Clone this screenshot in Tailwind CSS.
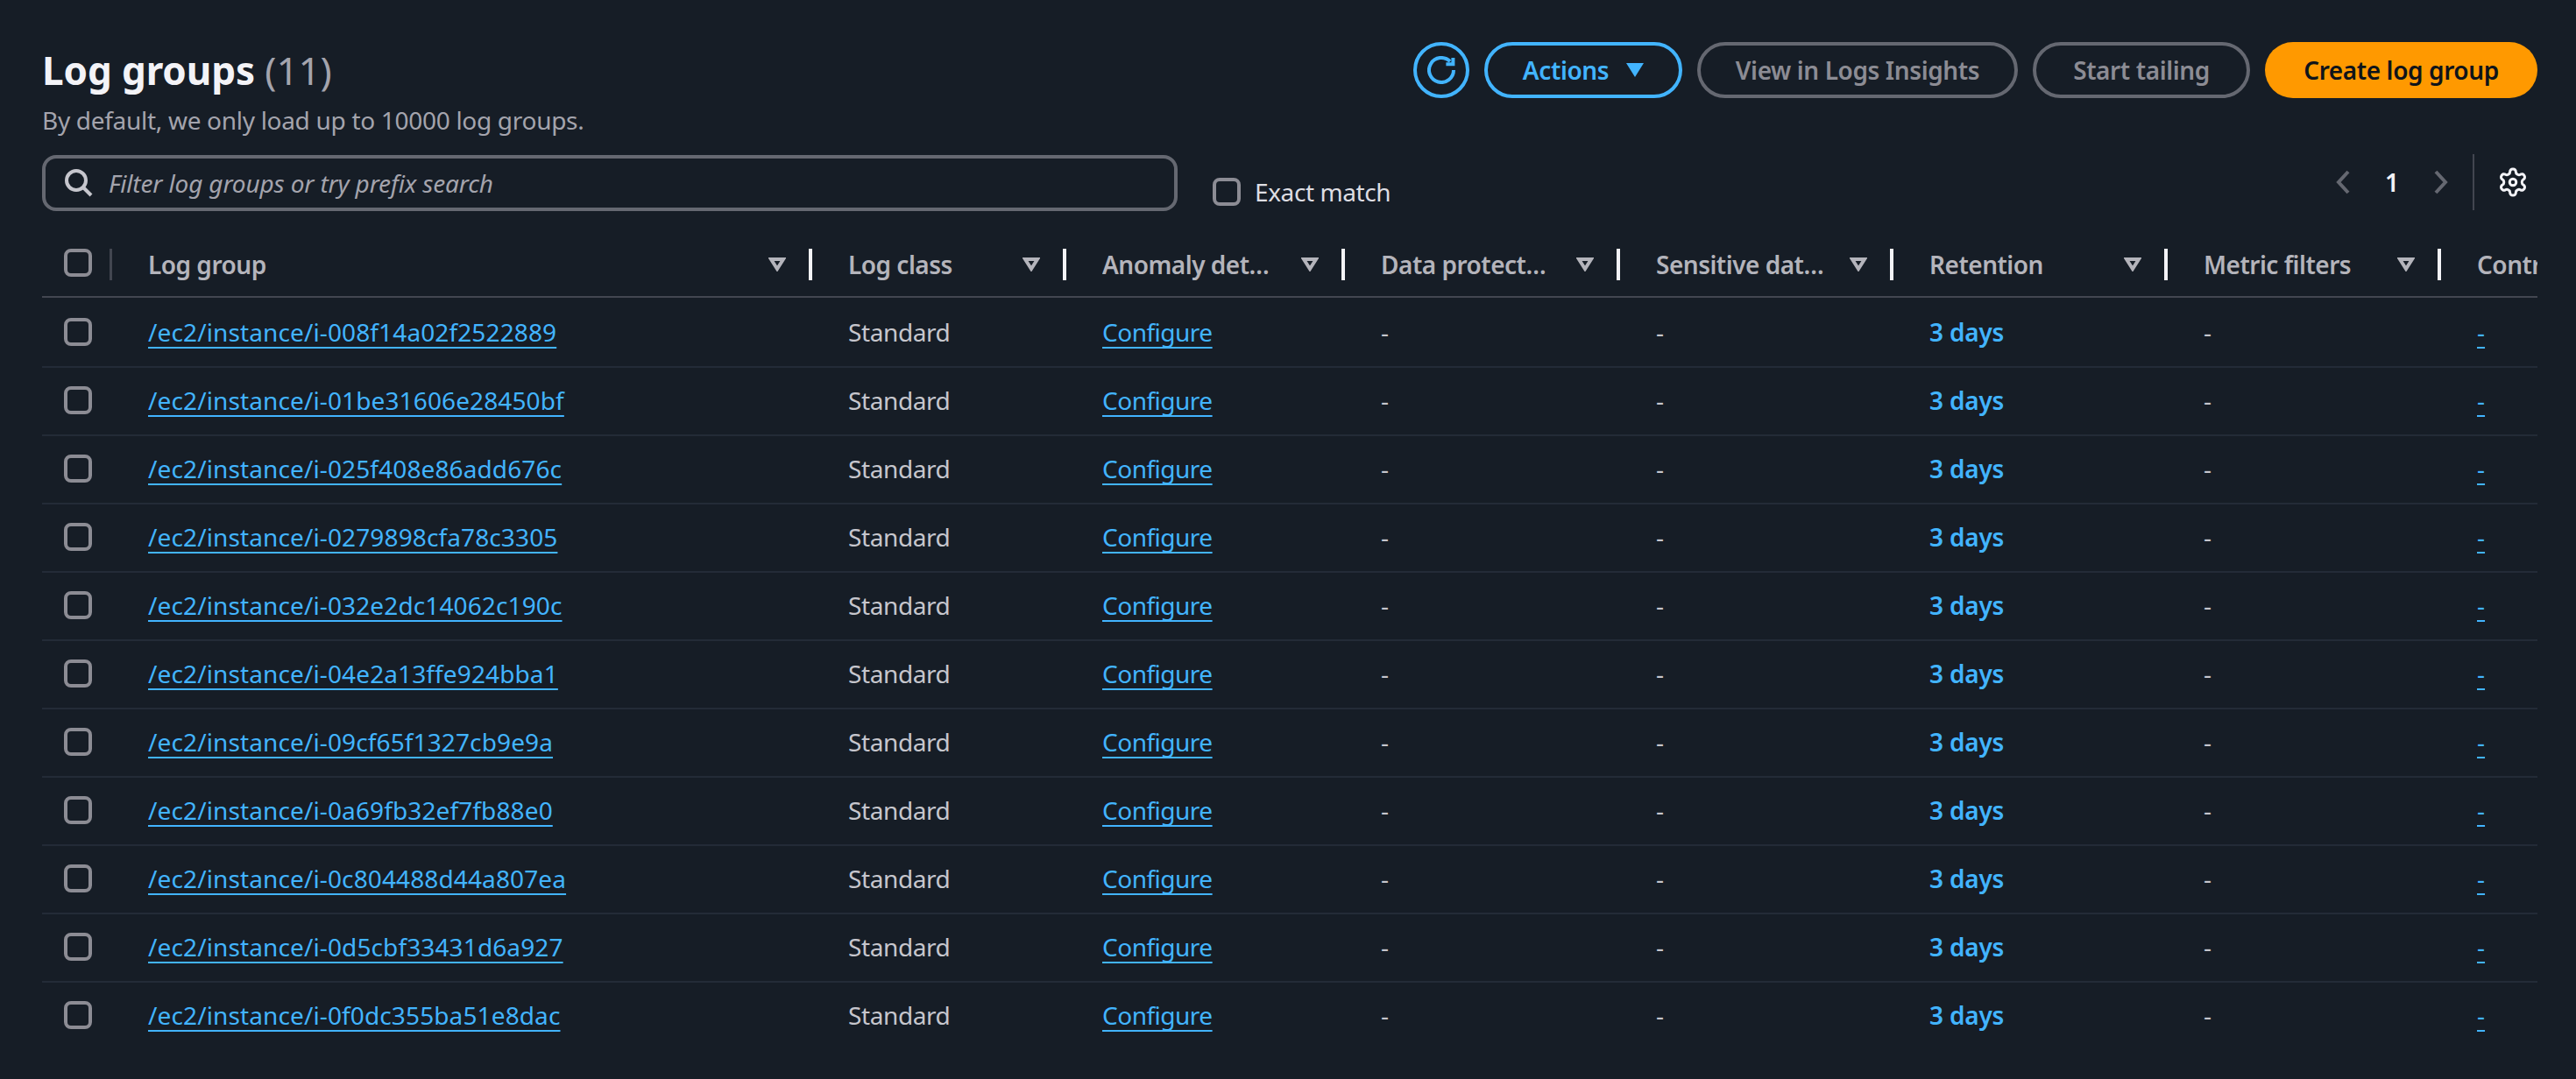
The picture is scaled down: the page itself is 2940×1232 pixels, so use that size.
<!DOCTYPE html>
<html lang="en">
<head>
<meta charset="UTF-8">
<title>Log groups</title>
<script src="https://cdn.jsdelivr.net/npm/@tailwindcss/browser@4"></script>
</head>
<body class="bg-[#161d26] font-['Noto_Sans',sans-serif] text-[28px] text-[#c6c6cd] overflow-hidden">
<main class="w-[2940px] h-[1232px] pl-12 pr-11 pt-12">

  <!-- Header -->
  <header class="flex justify-between h-[128px]">
    <div>
      <h1 class="text-[44px] leading-[72px] -mt-[4px] font-bold text-[#f3f3f7] tracking-[-0.1px]">Log groups <span class="font-normal text-[#a4a4ad]">(11)</span></h1>
      <p class="text-[#a4a4ad] leading-[36px] mt-[3px] tracking-[-0.3px]">By default, we only load up to 10000 log groups.</p>
    </div>
    <div class="flex gap-[17px] h-16 font-semibold tracking-[-0.4px]">
      <button class="w-16 h-16 rounded-full border-4 border-[#42b4ff] flex items-center justify-center">
        <svg class="w-8 h-8" viewBox="0 0 16 16" fill="none" stroke="#42b4ff" stroke-width="2"><path d="M15 8a7 7 0 1 1-2-4.9"/><path d="M14.7 1v3.6h-4"/></svg>
      </button>
      <button class="w-[226px] h-16 rounded-full border-4 border-[#42b4ff] text-[#42b4ff] flex items-center justify-center gap-5">
        Actions
        <svg class="w-5 h-4" viewBox="0 0 20 16"><path d="M0 0h20L10 16z" fill="#42b4ff"/></svg>
      </button>
      <button class="w-[366px] h-16 rounded-full border-4 border-[#656871] text-[#8c8c94]">View in Logs Insights</button>
      <button class="w-[248px] h-16 rounded-full border-4 border-[#656871] text-[#8c8c94]">Start tailing</button>
      <button class="w-[311px] h-16 rounded-full bg-[#ff9900] text-[#0f141a]">Create log group</button>
    </div>
  </header>

  <!-- Filter and pagination -->
  <section class="flex h-16 mt-[1px]">
    <div class="w-[1296px] h-16 rounded-2xl border-4 border-[#656871] flex items-center pl-[22px] gap-[18px]">
      <svg class="w-8 h-8 shrink-0" viewBox="0 0 16 16" fill="none" stroke="#c6c6cd" stroke-width="2"><circle cx="6.5" cy="6.5" r="5.5"/><path d="M10.5 10.5L15 15"/></svg>
      <span class="italic text-[#a4a4ad] tracking-[-0.15px]">Filter log groups or try prefix search</span>
    </div>
    <label class="ml-10 flex items-center gap-4 h-16 self-start mt-[10px] text-[#dedee3] tracking-[-0.4px]">
      <span class="w-8 h-8 rounded-lg border-4 border-[#8c8c94]"></span>
      Exact match
    </label>
    <div class="ml-auto flex items-center h-16 -mt-[1px] mr-[10px]">
      <svg class="w-4 h-7" viewBox="0 0 16 28" fill="none" stroke="#656871" stroke-width="4"><path d="M14 2L3 14l11 12"/></svg>
      <span class="w-[96px] text-center text-[#f3f3f7] font-semibold">1</span>
      <svg class="w-4 h-7" viewBox="0 0 16 28" fill="none" stroke="#656871" stroke-width="4"><path d="M2 2l11 12L2 26"/></svg>
      <span class="w-[2px] h-16 bg-[#424650] ml-[28px]"></span>
      <svg class="w-9 h-9 ml-[26px] mb-[1px]" viewBox="0 0 24 24" fill="none" stroke="#f3f3f7" stroke-width="2"><path d="M12.22 2h-.44a2 2 0 0 0-2 2v.18a2 2 0 0 1-1 1.73l-.43.25a2 2 0 0 1-2 0l-.15-.08a2 2 0 0 0-2.73.73l-.22.38a2 2 0 0 0 .73 2.73l.15.1a2 2 0 0 1 1 1.72v.51a2 2 0 0 1-1 1.74l-.15.09a2 2 0 0 0-.73 2.73l.22.38a2 2 0 0 0 2.73.73l.15-.08a2 2 0 0 1 2 0l.43.25a2 2 0 0 1 1 1.73V20a2 2 0 0 0 2 2h.44a2 2 0 0 0 2-2v-.18a2 2 0 0 1 1-1.73l.43-.25a2 2 0 0 1 2 0l.15.08a2 2 0 0 0 2.73-.73l.22-.39a2 2 0 0 0-.73-2.73l-.15-.08a2 2 0 0 1-1-1.74v-.5a2 2 0 0 1 1-1.74l.15-.09a2 2 0 0 0 .73-2.73l-.22-.38a2 2 0 0 0-2.73-.73l-.15.08a2 2 0 0 1-2 0l-.43-.25a2 2 0 0 1-1-1.73V4a2 2 0 0 0-2-2z"/><circle cx="12" cy="12" r="2.5"/></svg>
    </div>
  </section>

  <!-- Table -->
  <section class="mt-[29px] overflow-hidden">
    <div id="table-head" class="grid grid-cols-[80px_799px_290px_318px_314px_312px_313px_312px_200px] h-[64px] pb-1 border-b-2 border-[#424650] box-content w-[2848px] font-semibold text-[#b4b4bb] tracking-[-0.5px]"></div>
    <div id="table-body" class="pt-[2px]"></div>
  </section>
</main>

<script>
  // label, and the gap before the caret (decides where the label is cut)
  const columns = [
    ['Log group', 'ml-[22px]'],
    ['Log class', 'ml-[22px]'],
    ['Anomaly detection', 'ml-[22px]'],
    ['Data protection', 'ml-[30px]'],
    ['Sensitive data count', 'ml-[22px]'],
    ['Retention', 'ml-[22px]'],
    ['Metric filters', 'ml-[22px]']
  ];
  const groups = [
    'i-008f14a02f2522889', 'i-01be31606e28450bf', 'i-025f408e86add676c', 'i-0279898cfa78c3305',
    'i-032e2dc14062c190c', 'i-04e2a13ffe924bba1', 'i-09cf65f1327cb9e9a', 'i-0a69fb32ef7fb88e0',
    'i-0c804488d44a807ea', 'i-0d5cbf33431d6a927', 'i-0f0dc355ba51e8dac'
  ];

  let head = `<div class="flex items-center pl-[25px]"><span class="w-8 h-8 mb-1 rounded-lg border-4 border-[#8c8c94]"></span><span class="w-[3px] h-9 bg-[#424650] ml-5"></span></div>`;
  columns.forEach(function(col) {
    head += `<div class="flex items-center pl-[41px] min-w-0"><span class="truncate flex-1">${col[0]}</span><svg class="w-5 h-4 shrink-0 ${col[1]}" viewBox="0 0 20 16" fill="none" stroke="#b4b4bb" stroke-width="4"><path d="M3 2h14L10 13z"/></svg><span class="w-1 h-9 bg-[#f3f3f7] ml-[26px] shrink-0"></span></div>`;
  });
  head += `<div class="flex items-center pl-[41px]"><span class="whitespace-nowrap">Contributor Insights</span></div>`;
  document.getElementById('table-head').innerHTML = head;

  let rows = '';
  groups.forEach(function(id, i) {
    const border = i < groups.length - 1 ? 'border-[#232b37]' : 'border-transparent';
    rows += `<div class="grid grid-cols-[80px_799px_290px_318px_314px_312px_313px_312px_200px] w-[2848px] items-center h-[78px] pb-[2px] border-b-2 ${border}">
      <div class="pl-[25px] flex"><span class="w-8 h-8 rounded-lg border-4 border-[#8c8c94]"></span></div>
      <div class="pl-[41px]"><a class="text-[#42b4ff] tracking-[0.12px] underline underline-offset-[6px] decoration-2 [text-decoration-skip-ink:none]">/ec2/instance/${id}</a></div>
      <div class="pl-[41px] tracking-[-0.4px]">Standard</div>
      <div class="pl-[41px]"><a class="text-[#42b4ff] tracking-[-0.5px] underline underline-offset-[6px] decoration-2 [text-decoration-skip-ink:none]">Configure</a></div>
      <div class="pl-[41px]">-</div>
      <div class="pl-[41px]">-</div>
      <div class="pl-[41px] text-[#42b4ff] font-semibold tracking-[-0.2px]">3 days</div>
      <div class="pl-[41px]">-</div>
      <div class="pl-[41px]"><a class="text-[#42b4ff] underline underline-offset-[6px] decoration-2 [text-decoration-skip-ink:none]">-</a></div>
    </div>`;
  });
  document.getElementById('table-body').innerHTML = rows;
</script>
</body>
</html>
